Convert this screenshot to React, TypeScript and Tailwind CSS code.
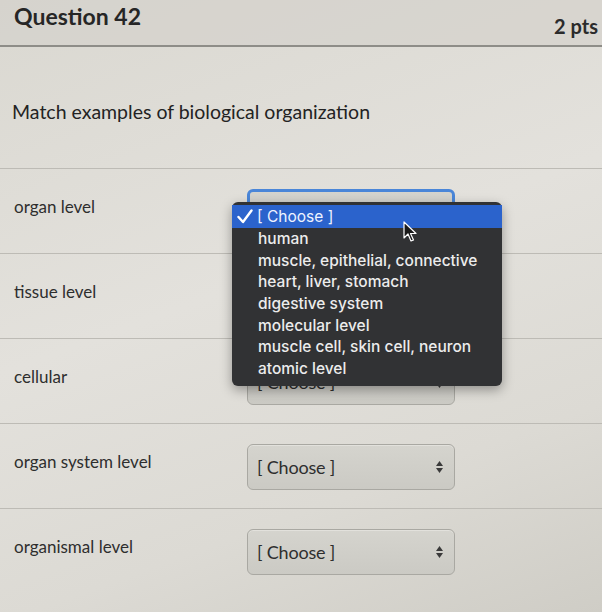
import React from "react";

const rows = [
  "organ level",
  "tissue level",
  "cellular",
  "organ system level",
  "organismal level",
];

const menuItems = [
  "human",
  "muscle, epithelial, connective",
  "heart, liver, stomach",
  "digestive system",
  "molecular level",
  "muscle cell, skin cell, neuron",
  "atomic level",
];

function Arrows() {
  return (
    <svg width="9" height="14" viewBox="0 0 9 14">
      <path d="M4.5 1 L8 6 L1 6 Z" fill="#3a3a3a" />
      <path d="M4.5 13 L8 8 L1 8 Z" fill="#3a3a3a" />
    </svg>
  );
}

function Select({ focused }: { focused?: boolean }) {
  return (
    <div
      className={
        "w-[208px] h-[46px] rounded-[6px] flex items-center justify-between pl-[9px] pr-[10px] bg-[linear-gradient(180deg,#d5d4ce,#cbcac4)] " +
        (focused
          ? "border-[3px] border-[#4a86d8]"
          : "border border-[#a9a8a2] shadow-[inset_0_1px_0_#e2e1dc]")
      }
    >
      <span className="text-[18px] text-[#2e2e2e] tracking-[-0.2px]">[ Choose ]</span>
      <Arrows />
    </div>
  );
}

export default function App() {
  return (
    <div
      className="relative w-[602px] h-[612px] overflow-hidden bg-[linear-gradient(160deg,#dad8d1_0%,#e3e1dc_45%,#dcdad4_75%,#cfcdc6_100%)] text-[#2b2b2b]"
      style={{ fontFamily: "Lato, 'Open Sans', sans-serif" }}
    >
      <div className="h-[47px] flex justify-between items-start px-[14px] bg-[#d4d2cc]/70 border-b-2 border-[#8e8d88]">
        <div className="text-[23px] font-bold leading-[30px] mt-[1px] text-[#262626]">Question 42</div>
        <div className="text-[20px] font-bold leading-[24px] mt-[14px] mr-[-10px] text-[#2b2b2b]">2 pts</div>
      </div>

      <div className="h-[122px] pl-[12px] pt-[52px] border-b border-[#bdbbb5]">
        <div className="text-[19.5px] leading-[26px] text-[#232323]">
          Match examples of biological organization
        </div>
      </div>

      {rows.map((label, i) => (
        <div
          key={label}
          className={
            "h-[85px] flex items-start pl-[14px] " +
            (i < rows.length - 1 ? "border-b border-[#bdbbb5]" : "")
          }
        >
          <div className="w-[233px] pt-[27px] text-[17px] leading-[22px] text-[#2e2e2e]">{label}</div>
          <div className="pt-[20px]">
            <Select focused={i === 0} />
          </div>
        </div>
      ))}

      {/* dropdown menu */}
      <div
        className="absolute left-[232px] top-[202px] w-[270px] h-[184px] rounded-[6px] bg-[#313234] shadow-[0_4px_12px_rgba(0,0,0,0.35)] pt-[3px] text-[15.5px] text-[#ececec]"
        style={{ fontFamily: "Inter, 'Liberation Sans', sans-serif" }}
      >
        <div className="h-[23px] bg-[#2b63cc] flex items-center pl-[5px] text-[#eef3ff]">
          <svg width="16" height="15" viewBox="0 0 16 15" className="mr-[4px]">
            <path
              d="M1.5 8 L6 13 L14.5 1.5"
              fill="none"
              stroke="#ffffff"
              strokeWidth="2.4"
              strokeLinecap="round"
              strokeLinejoin="round"
            />
          </svg>
          <span className="font-normal">[ Choose ]</span>
        </div>
        {menuItems.map((t) => (
          <div key={t} className="h-[21.7px] leading-[21.7px] pl-[26px] font-medium">
            {t}
          </div>
        ))}
      </div>

      {/* cursor */}
      <svg
        className="absolute left-[403px] top-[221px]"
        width="14"
        height="22"
        viewBox="0 0 14 22"
      >
        <path
          d="M1 1 L1 17 L5 13 L8 20 L10.5 19 L7.5 12.5 L13 12.5 Z"
          fill="#1a1a1a"
          stroke="#ffffff"
          strokeWidth="1.2"
          strokeLinejoin="round"
        />
      </svg>
    </div>
  );
}
